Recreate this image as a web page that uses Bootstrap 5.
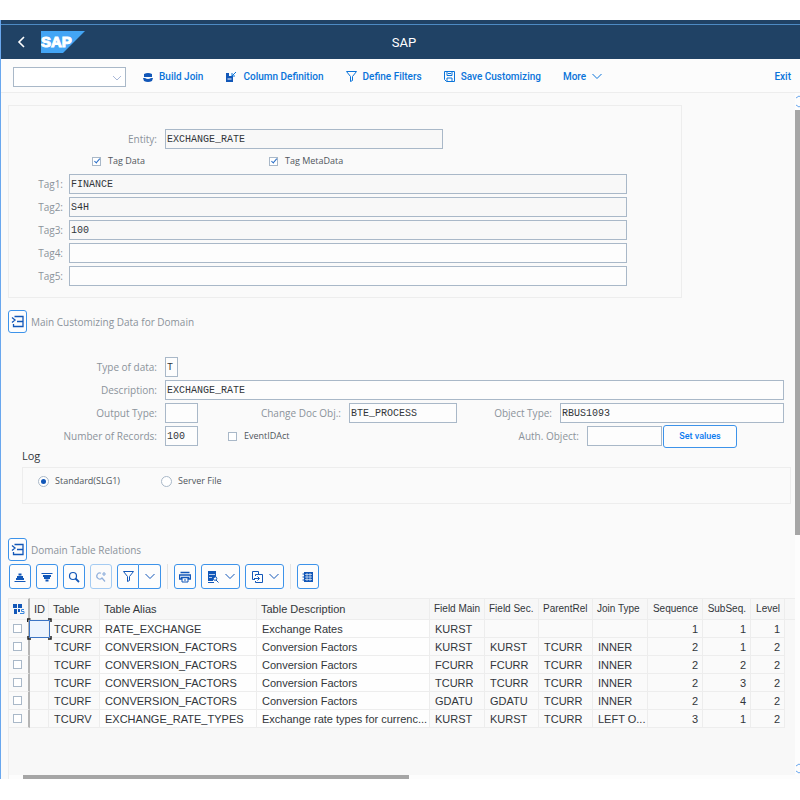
<!DOCTYPE html>
<html lang="en">
<head>
<meta charset="utf-8">
<meta name="viewport" content="width=device-width, initial-scale=1">
<title>SAP</title>
<link href="https://cdn.jsdelivr.net/npm/bootstrap@5.3.0/dist/css/bootstrap.min.css" rel="stylesheet">
<style>
  :root { --line:#a9b8c8; --blue:#0a74da; --edge:#ededed; --ui:"Open Sans","Noto Sans",sans-serif; }
  body { font:10px/14px var(--ui); color:#32363a; background:#fff; padding:20px 0 21px; }
  svg { display:block; fill:none; stroke:currentColor; flex:none; }
  .app { border-left:1px solid #69a7ee; background:#fafafa; }
  .strip { height:5px; background:#204265; border-bottom:1px solid #4d8ac4; }
  .shellbar { height:34px; background:#204265; color:#fff; display:grid; grid-template-columns:1fr auto 1fr; align-items:center; }
  .shellbar h1 { font:13px/18px Roboto,sans-serif; margin:1px 0 0 7px; }
  .shellbar .logo { margin-left:15px; }
  .plain { border:0; background:none; padding:0; color:inherit; }
  .actions { height:34px; background:#fcfcfc; border-bottom:1px solid var(--edge); padding:2px 9px 0 12px; }
  .action { font:500 10px/16px Roboto,sans-serif; color:var(--blue); display:flex; align-items:center; text-decoration:none; gap:6px; margin-left:22px; }
  .action.build { margin-left:17px; }
  .combo { width:113px; }
  .combo select { width:100%; height:20px; border:1px solid var(--line); border-radius:0; background:#fff; appearance:none; font-size:10px; display:block; }
  .combo svg { position:absolute; right:4px; top:8px; pointer-events:none; color:#a9b8d8; }
  .content { padding-left:7px; min-width:0; flex:1 1 0; }
  .box { border:1px solid var(--edge); }
  .entity-box { max-width:674px; min-height:193px; margin-top:12px; padding-top:23px; }
  .line-row { display:flex; align-items:center; height:20px; margin-bottom:3px; }
  .cap { color:#8b939b; text-align:right; padding-right:8px; flex:none; white-space:nowrap; }
  .cap-a { width:156px; } .cap-b { width:60px; padding-right:6px; } .cap-c { width:157px; } .cap-d { width:151px; } .cap-e { width:103px; }
  .field { height:20px; border:1px solid var(--line); background:#fdfdfd; padding:0 1px; font:10px/18px "Liberation Mono",monospace; color:#32363a; min-width:0; border-radius:0; }
  .field[readonly] { background:#f8f8f8; }
  .w-one { width:13px; } .w-three { width:33px; } .w-doc { width:108px; } .w-auth { width:75px; } .w-entity { width:278px; } .w-tag { width:558px; }
  .tick { font-size:9px; line-height:12px; display:flex; align-items:center; color:#50565c; }
  .tick input { appearance:none; width:9px; height:9px; border:1px solid var(--line); background:#fff; margin:0 7px 0 0; display:grid; place-items:center; }
  .tick input:checked::after { content:""; width:3px; height:6px; border:solid #2a6fc9; border-width:0 1px 1px 0; transform:rotate(40deg) translate(0,-1px); }
  .tick input[type=radio] { width:11px; height:11px; border-radius:50%; margin-right:6px; }
  .tick input[type=radio]:checked::after { width:5px; height:5px; border:0; border-radius:50%; background:#1257b8; transform:none; }
  .tag-ticks { padding-left:83px; height:12px; margin:6px 0 7px; }
  .first-tick { width:177px; }
  .push-event { margin-left:30px; }
  .keybtn { border:1px solid #3d93ea; border-radius:3px; background:#fdfdfd; color:#1257b8; padding:0; display:flex; align-items:center; justify-content:center; }
  .set-btn { width:74px; height:23px; margin:0 47px 0 1px; font:500 9px/12px Roboto,sans-serif; color:#0a7af0; }
  .expander { width:19px; height:23px; }
  .section-title { font:10px/14px var(--ui); color:#8b939b; margin:0 0 0 4px; }
  .main-title { margin-top:12px; }
  .domain-form { margin:24px 11px 0 0; }
  .log-title { font:11px/14px var(--ui); margin:0 0 4px 14px; }
  .log-box { margin:0 4px 0 14px; height:37px; padding:7px 0 0 15px; }
  .radio-a { width:123px; }
  .grid-title { margin-top:34px; }
  .grid-bar { margin-top:3px; padding-left:1px; gap:5px; }
  .sq { width:22px; height:25px; }
  .wide { width:39px; gap:6px; }
  .pale { opacity:.45; }
  .sep { width:1px; margin:0 1px; background:#e4e4e4; }
  .grid-area { margin-top:9px; background:#f8f8f8; border-left:1px solid var(--edge); }
  .data { width:100%; table-layout:fixed; border-collapse:separate; border-spacing:0; font:11px/14px "Liberation Sans",sans-serif; color:#32363a; }
  .data th, .data td { border-right:1px solid var(--edge); border-bottom:1px solid var(--edge); padding:0 0 0 5px; height:18px; white-space:nowrap; background:#fafafa; }
  .data th { height:22px; font-weight:400; border-top:1px solid var(--edge); background:#f7f7f7; padding:0 0 0 4px; }
  .data th.tight { font-size:10px; }
  .data td.light { background:#fefefe; }
  .data .pick { border-right:2px solid #b5b5b5; padding:0 0 0 4px; }
  .data .num { text-align:right; padding-left:0; padding-right:4px; }
  .data td:last-child, .data th:last-child { border-right:0; }
  .data td:last-child { background:#f8f8f8; border-bottom:0; }
  .data .tick input { margin:0; }
  .data td.cursor { padding:0; background:#ecf4fe; position:relative; }
  .cursor svg { position:absolute; left:-3px; top:-2px; }
  .hscroll { height:4px; background:#fdfdfd; padding-left:14px; }
  .hthumb { width:50%; background:#a6a6a6; }
  .gutter { width:5px; flex:none; background:#fdfdfd; color:#69a7ee; overflow:hidden; }
  .vthumb { flex:425 0 0; background:#a6a6a6; }
  .vrest { flex:227 0 0; }
</style>
<script src="https://cdn.jsdelivr.net/npm/bootstrap@5.3.0/dist/js/bootstrap.bundle.min.js"></script>
</head>
<body class="min-vh-100 d-flex flex-column">
<div class="app flex-grow-1 d-flex flex-column">
  <div class="strip"></div>
  <header class="shellbar">
    <div class="d-flex align-items-center">
      <button class="plain ms-3" type="button" aria-label="Back"><svg width="9" height="12" viewBox="0 0 9 12" stroke-width="1.6"><path d="M7 1 2 6l5 5"/></svg></button>
      <svg class="logo" width="44" height="22" viewBox="0 0 44 22" role="img" aria-label="SAP"><path d="M0 0H44L22 22H0Z" fill="#43a5f5" stroke="none"/><text x="0" y="16" font-family="Liberation Sans, sans-serif" font-size="15" font-weight="700" fill="#fff" stroke="#fff" stroke-width="1">SAP</text></svg>
    </div>
    <h1>SAP</h1>
  </header>
  <nav class="actions d-flex align-items-center" aria-label="Actions">
    <div class="combo position-relative"><select aria-label="Command"><option></option></select><svg width="10" height="6" viewBox="0 0 10 6"><path d="m1 1 4 4 4-4"/></svg></div>
    <button class="plain action build" type="button"><svg width="10" height="10" viewBox="0 0 10 10"><path d="M1 2Q5 0 9 2V5H1ZM0 6H2Q5 8 8 6H10L9 9Q5 11 1 9Z" fill="#1257b8" stroke="none"/></svg>Build Join</button>
    <button class="plain action" type="button"><svg width="12" height="11" viewBox="0 0 12 11"><path d="M1 2h3v3h4v6H1Z" fill="#1257b8" stroke="none"/><path d="M2.500 8h4" stroke="#fff"/><path d="m11 1-4 4M7 2v3h3"/></svg>Column Definition</button>
    <button class="plain action" type="button"><svg width="11" height="11" viewBox="0 0 11 11"><path d="M.5.5h10L6.500 5.500v4L4.500 10.500v-5Z"/></svg>Define Filters</button>
    <button class="plain action" type="button"><svg width="11" height="11" viewBox="0 0 11 11"><path d="M.5.5h10v10h-8l-2-2ZM3 .5v4h5v-4M3 10.500V7h5v3.500M4 2.500h3"/></svg>Save Customizing</button>
    <button class="plain action" type="button">More<svg width="10" height="7" viewBox="0 0 10 7"><path d="m.5 1 4.500 4.500L9.500 1"/></svg></button>
    <a class="action ms-auto" href="#">Exit</a>
  </nav>
  <div class="d-flex flex-grow-1">
    <main class="content d-flex flex-column">
      <section class="box entity-box">
        <div class="line-row"><label class="cap cap-a" for="entity">Entity:</label><input class="field w-entity" id="entity" readonly value="EXCHANGE_RATE"></div>
        <div class="tag-ticks d-flex"><label class="tick first-tick"><input type="checkbox" checked>Tag Data</label><label class="tick"><input type="checkbox" checked>Tag MetaData</label></div>
        <div class="line-row"><label class="cap cap-b" for="t1">Tag1:</label><input class="field w-tag" id="t1" readonly value="FINANCE"></div>
        <div class="line-row"><label class="cap cap-b" for="t2">Tag2:</label><input class="field w-tag" id="t2" readonly value="S4H"></div>
        <div class="line-row"><label class="cap cap-b" for="t3">Tag3:</label><input class="field w-tag" id="t3" readonly value="100"></div>
        <div class="line-row"><label class="cap cap-b" for="t4">Tag4:</label><input class="field w-tag" id="t4"></div>
        <div class="line-row"><label class="cap cap-b" for="t5">Tag5:</label><input class="field w-tag" id="t5"></div>
      </section>
      <div class="main-title d-flex align-items-center">
        <button class="keybtn expander" type="button" aria-label="Collapse section"><svg width="13" height="13" viewBox="0 0 13 13"><path d="M3.500 1.500H12v10H2.500V9M6 6.500h6M1 2.500 4 5 1 7.500" stroke-width="1.3"/></svg></button>
        <h2 class="section-title">Main Customizing Data for Domain</h2>
      </div>
      <section class="domain-form">
        <div class="line-row"><label class="cap cap-c" for="type">Type of data:</label><input class="field w-one" id="type" value="T"></div>
        <div class="line-row"><label class="cap cap-c" for="desc">Description:</label><input class="field flex-grow-1" id="desc" value="EXCHANGE_RATE"></div>
        <div class="line-row"><label class="cap cap-c" for="out">Output Type:</label><input class="field w-three" id="out"><label class="cap cap-d" for="doc">Change Doc Obj.:</label><input class="field w-doc" id="doc" value="BTE_PROCESS"><label class="cap cap-e" for="obj">Object Type:</label><input class="field flex-grow-1" id="obj" value="RBUS1093"></div>
        <div class="line-row"><label class="cap cap-c" for="num">Number of Records:</label><input class="field w-three" id="num" value="100"><label class="tick push-event"><input type="checkbox">EventIDAct</label><label class="cap ms-auto" for="auth">Auth. Object:</label><input class="field w-auth" id="auth"><button class="keybtn set-btn" type="button">Set values</button></div>
      </section>
      <h3 class="log-title">Log</h3>
      <div class="box log-box d-flex align-items-start"><label class="tick radio-a"><input type="radio" name="log" checked>Standard(SLG1)</label><label class="tick"><input type="radio" name="log">Server File</label></div>
      <div class="grid-title d-flex align-items-center">
        <button class="keybtn expander" type="button" aria-label="Collapse section"><svg width="13" height="13" viewBox="0 0 13 13"><path d="M3.500 1.500H12v10H2.500V9M6 6.500h6M1 2.500 4 5 1 7.500" stroke-width="1.3"/></svg></button>
        <h2 class="section-title">Domain Table Relations</h2>
      </div>
      <div class="grid-bar d-flex">
        <button class="keybtn sq" type="button" aria-label="Sort ascending"><svg width="12" height="12" viewBox="0 0 12 12"><path d="M4.500 3.500h3M3 6h6M2 8h8" stroke-width="1.8"/><path d="M.5 10.500h11"/></svg></button>
        <button class="keybtn sq" type="button" aria-label="Sort descending"><svg width="12" height="12" viewBox="0 0 12 12"><path d="M.5 2.500h11"/><path d="M2 5h8M3 7h6M4.500 9.500h3" stroke-width="1.8"/></svg></button>
        <button class="keybtn sq" type="button" aria-label="Find"><svg width="12" height="12" viewBox="0 0 12 12"><circle cx="5" cy="5" r="3.500" stroke-width="1.2"/><path d="m7.500 7.500 3.500 3.500" stroke-width="1.8"/></svg></button>
        <button class="keybtn sq pale" type="button" aria-label="Find next"><svg width="12" height="12" viewBox="0 0 12 12"><path d="M6 2.200A3 3 0 1 0 7 7l3 3.500M7 3h4M9 1v4" stroke-width="1.2"/></svg></button>
        <div class="d-flex"><button class="keybtn sq rounded-end-0" type="button" aria-label="Filter"><svg width="11" height="11" viewBox="0 0 11 11"><path d="M.5.5h10L6.500 5.500v4L4.500 10.500v-5Z"/></svg></button><button class="keybtn sq rounded-start-0 border-start-0" type="button" aria-label="Filter options"><svg width="10" height="7" viewBox="0 0 10 7"><path d="m.5 1 4.500 4.500L9.500 1"/></svg></button></div>
        <span class="sep"></span>
        <button class="keybtn sq" type="button" aria-label="Print"><svg width="12" height="12" viewBox="0 0 12 12"><path d="M1.500 1.500h9M.5 4h11v4H9.500V6.500h-7V8H.5Z" stroke-width="1.4"/><path d="M3 7v4h6V7M5 9h2"/></svg></button>
        <button class="keybtn wide" type="button" aria-label="Views"><svg width="12" height="12" viewBox="0 0 12 12"><path d="M1 0h8v5.500L6 8v2H1Z" fill="currentColor" stroke="none"/><path d="M2 3.500h6M2 6.500h3" stroke="#fff" stroke-width=".7"/><circle cx="8" cy="7.500" r="1.800"/><path d="m9 9 2.500 2.500M1 11.500h6"/></svg><svg width="10" height="7" viewBox="0 0 10 7"><path d="m.5 1 4.500 4.500L9.500 1"/></svg></button>
        <button class="keybtn wide" type="button" aria-label="Export"><svg width="12" height="12" viewBox="0 0 12 12"><path d="M4 8.500H1.500V.5h6V3M4.500 5V3.500h7v8h-7V10M3 7.500h5M6.500 5.500l2 2-2 2"/></svg><svg width="10" height="7" viewBox="0 0 10 7"><path d="m.5 1 4.500 4.500L9.500 1"/></svg></button>
        <span class="sep"></span>
        <button class="keybtn sq" type="button" aria-label="Layout"><svg width="12" height="12" viewBox="0 0 12 12"><path d="M2 1h9v10H2Z" fill="currentColor" stroke="none"/><path d="M3 3.500h7M3 6h7M3 8.500h7M5 2v8M8 2v8" stroke="#fff" stroke-width=".6"/><path d="M.5 3h2M.5 6h2M.5 9h2"/></svg></button>
      </div>
      <div class="grid-area flex-grow-1 d-flex flex-column justify-content-between">
        <table class="data">
          <colgroup id="cols"></colgroup>
          <thead><tr id="heads"></tr></thead>
          <tbody id="rows"></tbody>
        </table>
        <div class="hscroll d-flex"><div class="hthumb"></div></div>
      </div>
    </main>
    <div class="gutter d-flex flex-column" aria-hidden="true">
      <svg width="8" height="17" viewBox="0 0 8 17"><path d="m1 5 3-2 3 2M1 12l3 2 3-2"/></svg>
      <div class="vthumb"></div><div class="vrest"></div>
      <svg width="8" height="17" viewBox="0 0 8 17"><path d="m1 4 3-2 3 2M1 9l3 2 3-2"/></svg>
    </div>
  </div>
</div>
<script>
  const widths = [21, 19, 51, 157, 0, 55, 54, 54, 55, 55, 48, 34, 10];
  const heads = ["", "ID", "Table", "Table Alias", "Table Description", "Field Main", "Field Sec.", "ParentRel", "Join Type", "Sequence", "SubSeq.", "Level", ""];
  const rows = [
    ["TCURR", "RATE_EXCHANGE", "Exchange Rates", "KURST", "", "", "", 1, 1, 1],
    ["TCURF", "CONVERSION_FACTORS", "Conversion Factors", "KURST", "KURST", "TCURR", "INNER", 2, 1, 2],
    ["TCURF", "CONVERSION_FACTORS", "Conversion Factors", "FCURR", "FCURR", "TCURR", "INNER", 2, 2, 2],
    ["TCURF", "CONVERSION_FACTORS", "Conversion Factors", "TCURR", "TCURR", "TCURR", "INNER", 2, 3, 2],
    ["TCURF", "CONVERSION_FACTORS", "Conversion Factors", "GDATU", "GDATU", "TCURR", "INNER", 2, 4, 2],
    ["TCURV", "EXCHANGE_RATE_TYPES", "Exchange rate types for currenc...", "KURST", "KURST", "TCURR", "LEFT O...", 3, 1, 2]
  ];
  const picker = '<svg width="12" height="12" viewBox="0 0 12 12"><path d="M0 1h4v4H0ZM5 1h4v4H5ZM1 6h3v5H1ZM5 6h2v3H5Z" fill="#1257b8" stroke="none"/><path d="M11 6.500H8.500v2H11v2H7" stroke="#3a86dd"/></svg>';
  const frame = '<svg width="25" height="22" viewBox="0 0 25 22"><path d="M2.500 2.500h20v17h-20Z" stroke="#3b74c4"/><path d="M.5 4V1h3M21 1h3v3M24 18v3h-3M4 21H1v-3" stroke="#222" stroke-width="1.500"/></svg>';
  document.getElementById("cols").innerHTML = widths.map(w => w ? `<col style="width:${w}px">` : "<col>").join("");
  document.getElementById("heads").innerHTML = heads.map((h, i) => `<th class="${i === 0 ? "pick" : i > 4 ? "tight" : ""}${i > 8 && i < 12 ? " num" : ""}">${i === 0 ? picker : h}</th>`).join("");
  document.getElementById("rows").innerHTML = rows.map((r, n) =>
    `<tr><td class="pick"><span class="tick"><input type="checkbox" aria-label="Select row ${n + 1}"></span></td>` +
    (n === 0 ? `<td class="cursor">${frame}</td>` : "<td></td>") +
    r.map((v, i) => `<td class="${i > 6 ? "num" : i === 1 || i === 2 ? "light" : ""}">${v}</td>`).join("") + "<td></td></tr>").join("");
</script>
</body>
</html>
